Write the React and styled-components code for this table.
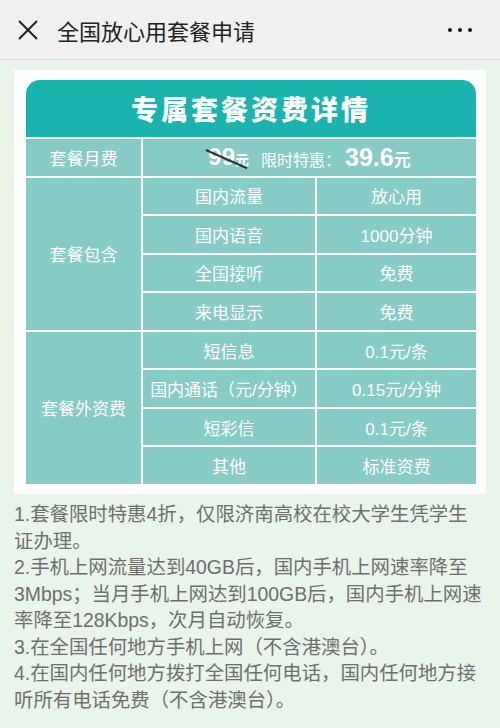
import React from 'react'
import styled, { createGlobalStyle } from 'styled-components'

const GlobalStyle = createGlobalStyle`
  html, body {
    margin: 0;
    padding: 0;
    background: #e9f4ea;
    font-family: "Liberation Sans", "Noto Sans CJK SC", sans-serif;
  }
`

const TopBar = styled.header`
  height: 59px;
  border-bottom: 1px solid #d9d9d9;
  background: #f0f0f0;
  display: flex;
  align-items: center;
  padding: 0 18px;
`

const CloseBtn = styled.svg`
  width: 20px;
  height: 20px;
  flex: none;
`

const Title = styled.h1`
  margin: 0 0 0 19px;
  font-size: 22px;
  font-weight: 400;
  color: #222;
  flex: 1;
`

const Dots = styled.div`
  display: flex;
  gap: 6px;
  margin-right: 10px;
`

const Dot = styled.span`
  width: 4px;
  height: 4px;
  border-radius: 50%;
  background: #111;
`

const Page = styled.main`
  padding: 10px 14px 0;
`

const Card = styled.section`
  background: #fff;
  padding: 10px 10px 10px 12px;
`

const TableHead = styled.div`
  height: 57px;
  background: #1bb3ae;
  border-radius: 14px 14px 0 0;
  display: flex;
  align-items: center;
  justify-content: center;
  color: #fff;
  font-family: "Noto Sans CJK SC", sans-serif;
  font-size: 27px;
  font-weight: 900;
  letter-spacing: 3px;
`

const Grid = styled.div`
  display: grid;
  grid-template-columns: 115px 172px 159px;
  grid-template-rows: repeat(9, 1fr);
  gap: 2px;
  padding-top: 2px;
  height: 345px;
  background: #fff;
  width: 450px;
`

const Cell = styled.div`
  background: #86cbc6;
  color: #fff;
  font-size: 17px;
  display: flex;
  align-items: center;
  justify-content: center;
  white-space: nowrap;
  grid-row: ${p => p.$rows ? `span ${p.$rows}` : 'auto'};
  grid-column: ${p => p.$cols ? `span ${p.$cols}` : 'auto'};
`

const OldPrice = styled.span`
  position: relative;
  font-weight: 700;
  font-size: 24px;
  margin-right: 12px;
  small {
    font-size: 14px;
  }
  &::after {
    content: '';
    position: absolute;
    left: -2px;
    top: 50%;
    width: 45px;
    height: 1.5px;
    background: #333;
    transform: rotate(24deg);
    transform-origin: left center;
    margin-top: -8px;
  }
`

const NewPrice = styled.span`
  font-size: 16px;
  b {
    font-size: 25px;
    font-weight: 700;
    margin-left: 4px;
  }
  i {
    font-style: normal;
    font-weight: 700;
    font-size: 17px;
  }
`

const Notes = styled.div`
  padding: 7px 2px 0 0;
  font-size: 19.4px;
  line-height: 26.5px;
  color: #6f6f6f;
  p {
    margin: 0;
  }
`

const included = [
  ['国内流量', '放心用'],
  ['国内语音', '1000分钟'],
  ['全国接听', '免费'],
  ['来电显示', '免费'],
]

const extra = [
  ['短信息', '0.1元/条'],
  ['国内通话（元/分钟）', '0.15元/分钟'],
  ['短彩信', '0.1元/条'],
  ['其他', '标准资费'],
]

export default function App() {
  return (
    <>
      <GlobalStyle />
      <TopBar>
        <CloseBtn viewBox="0 0 20 20">
          <path d="M1 1 L19 19 M19 1 L1 19" stroke="#222" strokeWidth="2" fill="none" />
        </CloseBtn>
        <Title>全国放心用套餐申请</Title>
        <Dots><Dot /><Dot /><Dot /></Dots>
      </TopBar>
      <Page>
        <Card>
          <TableHead>专属套餐资费详情</TableHead>
          <Grid>
            <Cell>套餐月费</Cell>
            <Cell $cols={2}>
              <OldPrice>99<small>元</small></OldPrice>
              <NewPrice>限时特惠：<b>39.6</b><i>元</i></NewPrice>
            </Cell>
            <Cell $rows={4}>套餐包含</Cell>
            {included.map(([k, v]) => (
              <React.Fragment key={k}>
                <Cell>{k}</Cell>
                <Cell>{v}</Cell>
              </React.Fragment>
            ))}
            <Cell $rows={4}>套餐外资费</Cell>
            {extra.map(([k, v]) => (
              <React.Fragment key={k}>
                <Cell>{k}</Cell>
                <Cell>{v}</Cell>
              </React.Fragment>
            ))}
          </Grid>
        </Card>
        <Notes>
          <p>1.套餐限时特惠4折，仅限济南高校在校大学生凭学生证办理。</p>
          <p>2.手机上网流量达到40GB后，国内手机上网速率降至3Mbps；当月手机上网达到100GB后，国内手机上网速率降至128Kbps，次月自动恢复。</p>
          <p>3.在全国任何地方手机上网（不含港澳台）。</p>
          <p>4.在国内任何地方拨打全国任何电话，国内任何地方接听所有电话免费（不含港澳台）。</p>
        </Notes>
      </Page>
    </>
  )
}
